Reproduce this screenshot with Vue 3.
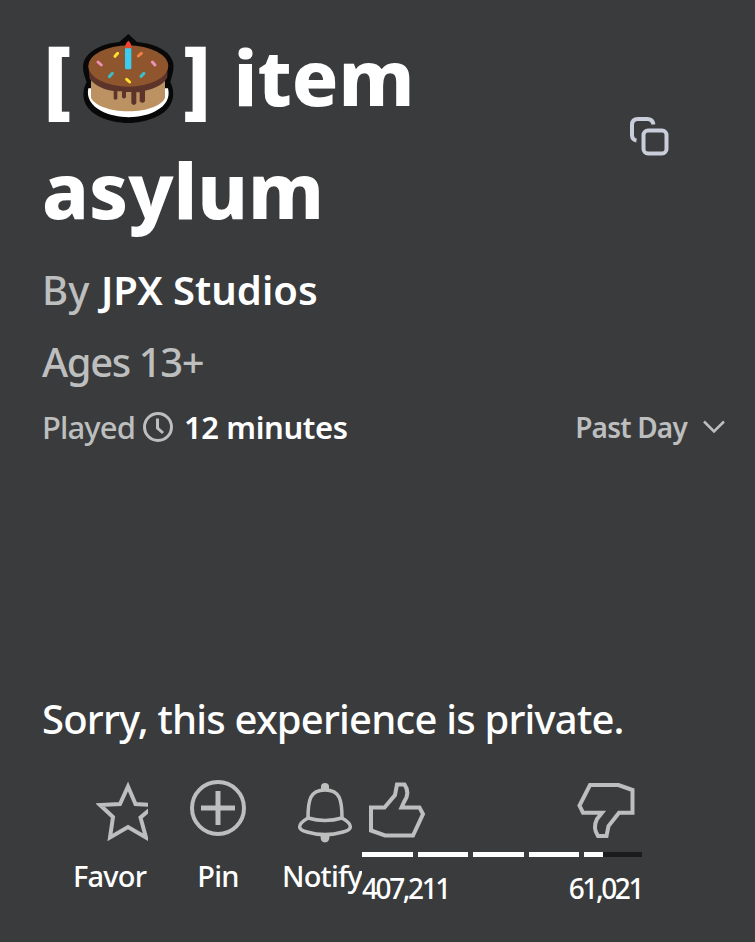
<template>
  <div class="game-page">
    <div class="title-row">
      <h1 class="title">
        <span class="bracket">[</span><svg class="cake" viewBox="36 24 285 276">
          <path d="M178 27 L204 51 C260 56 306 78 313 116 C316 140 306 157 304 172 C314 190 317 218 304 239 C285 274 232 292 178 294 C124 292 72 276 51 239 C39 218 42 190 53 172 C49 157 39 140 43 116 C51 80 96 56 151 51 Z" fill="#080808" />
          <path d="M58 190 C52 218 66 242 97 258 C145 283 216 282 260 258 C292 242 304 218 297 190 Z" fill="#fff" />
          <path d="M66 145 H288 V218 C282 239 235 259 178 259 C120 259 74 239 66 218 Z" fill="#bd9263" />
          <path d="M58 122 L62 162 C80 184 108 195 134 198 V221 Q139 227 145 221 V199 H159 V217 Q164 224 171 217 V201 H187 V235 Q194 245 202 235 V202 H212 V229 Q220 238 228 229 V197 C258 191 286 178 295 157 V122 Z" fill="#5c342a" />
          <ellipse cx="178" cy="123" rx="120" ry="62" fill="#8f552c" />
          <rect x="168" y="66" width="19" height="67" rx="5" fill="#3bcdf0" />
          <path d="M168 70 Q168 55 178 47 Q188 55 188 70 Z" fill="#f0442c" />
          <g fill="none" stroke-width="9" stroke-linecap="round">
            <path d="M138 94 L146 85 M173 163 L182 171" stroke="#ffe12e" />
            <path d="M208 93 L217 85" stroke="#f5803f" />
            <path d="M87 111 L97 120 M250 111 L258 120" stroke="#ef8fbd" />
            <path d="M121 155 L130 145 M216 154 L225 145" stroke="#3fbcc9" />
          </g>
        </svg><span class="bracket close">]</span> item asylum
      </h1>
      <button class="copy" aria-label="Copy">
        <svg width="42" height="42" viewBox="0 0 42 42">
          <path d="M8.5 25.5 C5.5 25 4 23.5 4 20 V10 Q4 4 10 4 H19 C23 4 25 6 25.5 9.500" />
          <rect x="15.500" y="15.500" width="23" height="23" rx="4.500" />
        </svg>
      </button>
    </div>

    <div class="creator">
      <span class="by">By</span><a class="studio">JPX Studios</a>
    </div>
    <div class="ages">Ages 13+</div>

    <div class="played-row">
      <span class="played">Played</span>
      <svg class="clock" width="32" height="32" viewBox="0 0 32 32">
        <circle cx="16" cy="16" r="13.500" />
        <path d="M15.500 7.500 V17 L21 22" />
      </svg>
      <span class="minutes">12 minutes</span>
      <div class="period">
        <span class="day">Past Day</span>
        <svg width="24" height="16" viewBox="0 0 24 16">
          <path d="M2 2.500 L12 12.500 L22 2.500" />
        </svg>
      </div>
    </div>

    <div class="private">Sorry, this experience is private.</div>

    <div class="actions">
      <div class="action favorite">
        <svg width="64" height="64" viewBox="0 0 64 64">
          <path d="M32 6.500 L39.500 24 L59 25 L44.500 37.500 L50 57.500 L32 47 L14 57.500 L17 37 L4 25 L24 24 Z" />
        </svg>
        <span class="label">Favor</span>
      </div>
      <div class="action pin">
        <svg width="58" height="64" viewBox="0 0 58 64">
          <circle cx="29" cy="28" r="26" />
          <path d="M29 11 V45 M12 28 H46" stroke-width="5" />
        </svg>
        <span class="label">Pin</span>
      </div>
      <div class="action notify">
        <svg width="58" height="64" viewBox="0 0 58 64">
          <path class="solid" d="M25 10 V6.500 Q25 3 29 3 T33 6.500 V10 Z M24.500 56 H33.500 Q33.500 62.500 29 62.500 T24.500 56 Z" />
          <path d="M12 38 C12 20 14 10 29 10 S46 20 46 38" />
          <path d="M12 38 C0 45 2 50 11 52 C23 55.500 35 55.500 47 52 C56 50 58 45 46 38 Q29 43 12 38 Z" />
        </svg>
        <span class="label">Notify</span>
      </div>
      <div class="votes">
        <div class="thumbs">
          <svg width="60" height="60" viewBox="0 0 60 60">
            <path d="M4 27.500 H17.500 L28 15 L30 4.500 H37.500 Q43.500 13 37 22 L34.500 27.500 H52.500 L56 34 L46 55.500 H18 L4 50.500 Z" />
          </svg>
          <svg width="60" height="60" viewBox="0 0 60 60">
            <path d="M13 5 H41.500 L55.500 10 V32.700 H42 L31.500 46 L29.500 56 H21 Q15.500 48 20 39 L25 32.700 H6 L2.500 25.500 Z" />
          </svg>
        </div>
        <div class="bar">
          <div v-for="(fill, i) in segments" :key="i" class="segment">
            <div class="fill" :style="{ width: fill + '%' }"></div>
          </div>
        </div>
        <div class="counts">
          <span>{{ upVotes }}</span>
          <span>{{ downVotes }}</span>
        </div>
      </div>
    </div>
  </div>
</template>

<script setup>
import { ref } from 'vue';

const upVotes = ref('407,211');
const downVotes = ref('61,021');

// Remplissage de chaque segment, en pourcentage
const segments = ref([100, 100, 100, 100, 33]);
</script>

<style>
body {
  background-color: #393b3d;
}
</style>

<style scoped>
.game-page {
  box-sizing: border-box;
  width: 755px;
  height: 942px;
  padding: 20px 30px 0 42px;
  overflow: hidden;
  background-color: #393b3d;
  color: #fff;
  font-family: "Noto Sans", "Open Sans", sans-serif;
  white-space: nowrap;
}

svg {
  display: block;
  flex: none;
  fill: none;
  stroke: #bdbebe;
  stroke-width: 4;
}

.title-row {
  display: flex;
  align-items: center;
  justify-content: space-between;
  height: 234px;
}

.title {
  align-self: flex-start;
  width: 480px;
  margin: 0;
  font-size: 77px;
  font-weight: 800;
  line-height: 113px;
  letter-spacing: 0;
  white-space: normal;
}

.bracket {
  margin-left: 2px;
  font-size: 84px;
  font-weight: 900;
  line-height: 1;
  vertical-align: -2px;
}

.close {
  margin: 0 3px 0 0;
}

.cake {
  display: inline-block;
  width: 95px;
  height: 92px;
  margin: 0 7px 0 10px;
  vertical-align: -19px;
  stroke: none;
}

.copy {
  margin: -2px 55px 0 0;
  padding: 0;
  border: none;
  background: none;
}

.copy svg {
  stroke: #cacedb;
}

.creator,
.ages {
  height: 72px;
  font-size: 40px;
  line-height: 72px;
}

.by,
.ages,
.played,
.day {
  color: #bdbebe;
}

.by {
  display: inline-block;
  width: 59px;
  font-weight: 500;
}

.studio {
  font-weight: 600;
}

.ages {
  font-weight: 500;
  letter-spacing: -1.4px;
}

.played-row {
  display: flex;
  align-items: center;
  height: 58px;
  font-size: 31px;
  line-height: 58px;
}

.played {
  width: 100px;
  font-weight: 500;
  letter-spacing: -0.9px;
}

.clock {
  stroke-width: 3;
}

.minutes {
  margin-left: 10px;
  font-weight: 600;
  letter-spacing: -0.4px;
}

.period {
  display: flex;
  align-items: center;
  gap: 15px;
  margin: -1px -1px 0 auto;
  font-size: 28px;
  font-weight: 600;
  letter-spacing: -0.8px;
}

.period svg {
  stroke-width: 2.500;
}

.private {
  margin-top: 233px;
  font-size: 40px;
  font-weight: 500;
  line-height: 60px;
  letter-spacing: -0.8px;
}

.actions {
  display: flex;
  padding: 31px 0 0 31px;
}

.action {
  height: 130px;
  overflow: hidden;
}

.label {
  display: block;
  margin-top: 12px;
  font-size: 29px;
  font-weight: 500;
  line-height: 40px;
  letter-spacing: -0.8px;
}

.favorite {
  width: 75px;
}

.favorite svg {
  margin-left: 23px;
}

.pin {
  width: 58px;
  margin-left: 41px;
  text-align: center;
}

.notify {
  width: 80px;
  margin-left: 35px;
}

.notify svg {
  margin-left: 14px;
  stroke-width: 3.500;
}

.solid {
  fill: #bdbebe;
  stroke: none;
}

.votes {
  width: 280px;
}

.thumbs {
  display: flex;
  justify-content: space-between;
  height: 72px;
  padding: 0 5px;
}

.bar {
  display: flex;
  gap: 5px;
  height: 5px;
}

.segment {
  width: 50.5px;
  background-color: #191b1d;
}

.segment:last-child {
  flex: 1;
}

.fill {
  height: 100%;
  background-color: #fff;
}

.counts {
  display: flex;
  justify-content: space-between;
  margin-top: 11px;
  font-size: 28px;
  font-weight: 500;
  line-height: 40px;
  letter-spacing: -2.4px;
}
</style>
